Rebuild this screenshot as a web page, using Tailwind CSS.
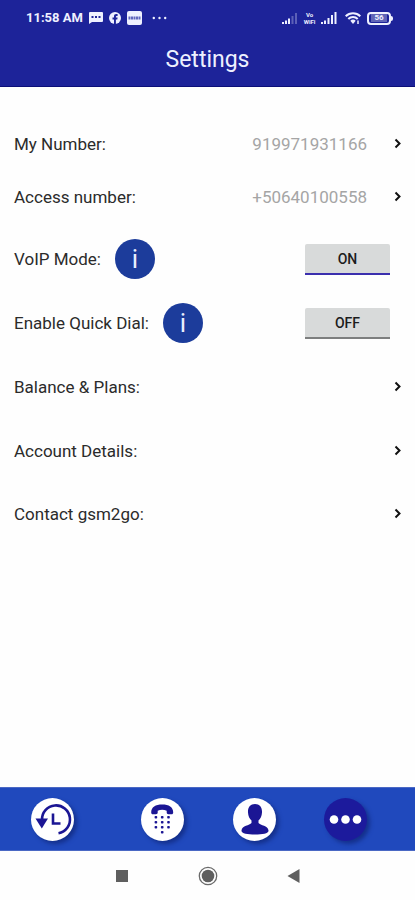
<!DOCTYPE html>
<html lang="en">
<head>
<meta charset="utf-8">
<meta name="viewport" content="width=device-width, initial-scale=1">
<title>Settings</title>
<script src="https://cdn.jsdelivr.net/npm/@tailwindcss/browser@4"></script>
</head>
<body class="flex min-h-screen flex-col bg-[#fefefe] font-['Roboto',sans-serif] text-[17px] leading-6 text-[#2b2b2b]">
<header class="border-b border-[#0c0f78] bg-[#1d2399] text-[#eef0ff]">
  <div class="flex h-9 items-center justify-between pr-[22px] pl-[26px]">
    <div class="flex items-center gap-[6px]">
      <span class="text-[13px] leading-9 font-bold">11:58 AM</span>
      <svg class="h-3 w-[14px]" viewBox="0 0 14 12" aria-hidden="true"><path d="M1 0h12a1 1 0 0 1 1 1v8a1 1 0 0 1-1 1H3l-3 2V1a1 1 0 0 1 1-1z" fill="currentColor"/><path d="M2.5 4h2v2h-2zM6 4h2v2H6zM9.500 4h2v2h-2z" fill="#1d2399"/></svg>
      <svg class="h-3 w-3" viewBox="0 0 12 12" aria-hidden="true"><circle cx="6" cy="6" r="6" fill="currentColor"/><path d="M5 12V7.500H3.500v-2H5V4.300C5 2.700 5.900 2 7.200 2l1.400.1V4h-.9c-.6 0-.8.3-.8.8v.7h1.700l-.3 2H6.900V12z" fill="#1d2399"/></svg>
      <svg class="h-[14px] w-[15px]" viewBox="0 0 15 14" aria-hidden="true"><rect width="15" height="14" rx="2" fill="currentColor"/><path d="M1.500 7h12" stroke="#6167bd" stroke-width="3" stroke-dasharray="2 .5"/></svg>
      <svg class="ml-1 h-3 w-[15px]" viewBox="0 0 15 12" fill="currentColor" aria-hidden="true"><circle cx="1.800" cy="6" r="1.200"/><circle cx="7.500" cy="6" r="1.200"/><circle cx="13.200" cy="6" r="1.200"/></svg>
    </div>
    <div class="flex items-center gap-1">
      <svg class="h-3 w-4" viewBox="0 0 16 12" fill="currentColor" aria-hidden="true"><path d="M0 10h2v2H0zM3 8.500h2V12H3zM6 6.500h2V12H6z"/><path d="M9.500 4h2v8h-2zM13 1h2v11h-2z" opacity=".3"/></svg>
      <span class="flex w-[15px] flex-col items-center text-[6px] leading-[7px] font-bold"><span>Vo</span><span>WiFi</span></span>
      <svg class="h-3 w-4" viewBox="0 0 16 12" fill="currentColor" aria-hidden="true"><path d="M0 10h2v2H0zM3 8.500h2V12H3zM6.500 6h2v6h-2zM10 3h2v9h-2zM13.500 0h2v12h-2z"/></svg>
      <svg class="ml-1 h-3 w-4" viewBox="0 0 16 12" fill="none" stroke="currentColor" stroke-width="2" aria-hidden="true"><path d="M.7 4.200a10.500 10.500 0 0 1 14.600 0M3.300 7a6.600 6.600 0 0 1 9.400 0"/><path d="M5.300 8.800a4 4 0 0 1 5.400 0L8 12z" fill="currentColor" stroke="none"/><path d="M13 8.500V12" stroke-width="1.500"/></svg>
      <div class="ml-[2px] flex items-center">
        <span class="flex h-[13px] w-6 items-center justify-center rounded-[4px] border-2 border-[#eef0ff] text-[8px] leading-none font-bold"><span class="bg-white/30 px-[3px]">56</span></span>
        <span class="h-[5px] w-[2px] rounded-r-sm bg-[#eef0ff]"></span>
      </div>
    </div>
  </div>
  <h1 class="h-[50px] text-center text-[23px] leading-[48px]">Settings</h1>
</header>

<main class="flex-1 pt-[30px] pr-[10px] pl-[14px]">
  <a href="#number" class="flex h-[53px] items-center">
    <span>My Number:</span><span class="ml-auto text-[#a5a5a5]">919971931166</span>
    <svg class="ml-[22px] h-4 w-4" viewBox="0 0 16 16" fill="none" stroke="#111" stroke-width="2" aria-hidden="true"><path d="M6.500 3.500 10.500 7.500l-4 4"/></svg>
  </a>
  <a href="#access" class="flex h-[53px] items-center">
    <span>Access number:</span><span class="ml-auto text-[#a5a5a5]">+50640100558</span>
    <svg class="ml-[22px] h-4 w-4" viewBox="0 0 16 16" fill="none" stroke="#111" stroke-width="2" aria-hidden="true"><path d="M6.500 3.500 10.500 7.500l-4 4"/></svg>
  </a>
  <div class="mt-1 flex h-16 items-center">
    <span id="voip">VoIP Mode:</span>
    <button aria-label="About VoIP Mode" class="ml-[14px] h-10 w-10 rounded-full bg-[#1c3c9b] text-[26px] leading-10 text-[#e8efff]">i</button>
    <button aria-labelledby="voip" aria-pressed="true" class="mr-[15px] ml-auto h-[31px] w-[85px] rounded-t-[2px] border-b-2 border-[#3b2fae] bg-[#d8dada] pt-[2px] text-[14px] font-medium text-[#1c1c1c]">ON</button>
  </div>
  <div class="flex h-16 items-center">
    <span id="dial">Enable Quick Dial:</span>
    <button aria-label="About Quick Dial" class="ml-[14px] h-10 w-10 rounded-full bg-[#1c3c9b] text-[26px] leading-10 text-[#e8efff]">i</button>
    <button aria-labelledby="dial" aria-pressed="false" class="mr-[15px] ml-auto h-[31px] w-[85px] rounded-t-[2px] border-b-2 border-[#7d7f7f] bg-[#d8dada] pt-[2px] text-[14px] font-medium text-[#1c1c1c]">OFF</button>
  </div>
  <a href="#balance" class="flex h-16 items-center justify-between">
    <span>Balance &amp; Plans:</span>
    <svg class="h-4 w-4" viewBox="0 0 16 16" fill="none" stroke="#111" stroke-width="2" aria-hidden="true"><path d="M6.500 3.500 10.500 7.500l-4 4"/></svg>
  </a>
  <a href="#account" class="flex h-[63px] items-center justify-between">
    <span>Account Details:</span>
    <svg class="h-4 w-4" viewBox="0 0 16 16" fill="none" stroke="#111" stroke-width="2" aria-hidden="true"><path d="M6.500 3.500 10.500 7.500l-4 4"/></svg>
  </a>
  <a href="#contact" class="flex h-[63px] items-center justify-between">
    <span>Contact gsm2go:</span>
    <svg class="h-4 w-4" viewBox="0 0 16 16" fill="none" stroke="#111" stroke-width="2" aria-hidden="true"><path d="M6.500 3.500 10.500 7.500l-4 4"/></svg>
  </a>
</main>

<nav aria-label="Main" class="grid h-16 grid-cols-[104fr_116fr_68fr_114fr] place-items-center border-y border-[#4a68c4] bg-[#2049bd] pr-[13px]">
  <a href="#history" aria-label="History" class="h-[43px] w-[43px] rounded-full bg-white shadow-[3px_3px_4px_#14308c]">
    <svg viewBox="0 0 43 43" fill="none" stroke="#1b1694" stroke-width="2.600"><path d="M11 22A14 14 0 1 1 27.500 35.200"/><path d="M4.500 20.500h12.500L10.800 30.500z" fill="#1b1694" stroke="none"/><path d="M22 15.500V25.500h7.500"/></svg>
  </a>
  <a href="#dialpad" aria-label="Dial pad" class="h-[43px] w-[43px] rounded-full bg-white shadow-[3px_3px_4px_#14308c]">
    <svg viewBox="0 0 43 43" fill="#1b1694"><path d="M10.200 14.500C10.200 9 14.500 6.500 21.200 6.500s11 2.500 11 8c0 1.200-.6 1.800-1.700 1.800h-3c-1.200 0-1.800-.6-1.800-1.700v-1.800c-2.800-1.300-6.200-1.300-9 0v1.800c0 1.100-.6 1.700-1.800 1.700h-3c-1.100 0-1.700-.6-1.700-1.800z"/><g><rect x="13.600" y="18" width="2.600" height="2.600" rx=".8"/><rect x="19.900" y="18" width="2.600" height="2.600" rx=".8"/><rect x="26.200" y="18" width="2.600" height="2.600" rx=".8"/><rect x="13.600" y="23" width="2.600" height="2.600" rx=".8"/><rect x="19.900" y="23" width="2.600" height="2.600" rx=".8"/><rect x="26.200" y="23" width="2.600" height="2.600" rx=".8"/><rect x="13.600" y="28" width="2.600" height="2.600" rx=".8"/><rect x="19.900" y="28" width="2.600" height="2.600" rx=".8"/><rect x="26.200" y="28" width="2.600" height="2.600" rx=".8"/><rect x="19.900" y="33" width="2.600" height="2.600" rx=".8"/></g></svg>
  </a>
  <a href="#contacts" aria-label="Contacts" class="h-[43px] w-[43px] rounded-full bg-white shadow-[3px_3px_4px_#14308c]">
    <svg viewBox="0 0 43 43" fill="#1b1694"><path d="M22 6c4.700 0 7.300 3.200 7 8.500-.2 3.500-1.500 6.200-3.500 8v2.500c2 2.500 9.500 2.500 10 7.500.3 3-6 4-13.500 4s-13.800-1-13.500-4c.5-5 8-5 10-7.500v-2.500c-2-1.800-3.300-4.500-3.500-8C14.700 9.200 17.300 6 22 6z"/></svg>
  </a>
  <a href="#more" aria-label="More" aria-current="page" class="h-[43px] w-[43px] rounded-full bg-[#1c1a9c] shadow-[3px_3px_4px_#14308c]">
    <svg viewBox="0 0 43 43" fill="#fff"><circle cx="10" cy="21.500" r="4.300"/><circle cx="21.500" cy="21.500" r="4.300"/><circle cx="33" cy="21.500" r="4.300"/></svg>
  </a>
</nav>
<div class="flex h-[49px] items-center justify-center">
  <button aria-label="Recent apps" class="flex w-[86px] justify-center"><svg class="h-5 w-5" viewBox="0 0 20 20"><path d="M4 4h12v12H4z" fill="#5f5f5f"/></svg></button>
  <button aria-label="Home" class="flex w-[86px] justify-center"><svg class="h-5 w-5" viewBox="0 0 20 20"><circle cx="10" cy="10" r="8.700" fill="none" stroke="#6a6a6a" stroke-width="1.300"/><circle cx="10" cy="10" r="6.300" fill="#5f5f5f"/></svg></button>
  <button aria-label="Back" class="flex w-[86px] justify-center"><svg class="h-5 w-5" viewBox="0 0 20 20"><path d="M15.500 3v14L3.500 10z" fill="#5f5f5f"/></svg></button>
</div>
</body>
</html>
